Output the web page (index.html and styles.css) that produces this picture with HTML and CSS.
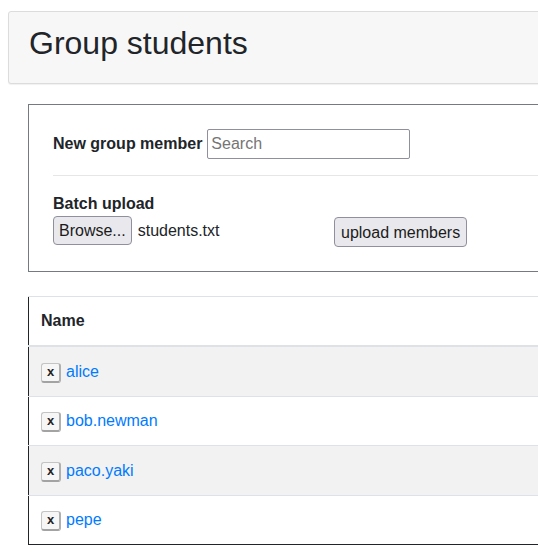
FILE: index.html
```html
<!DOCTYPE html>
<html lang="en">
<head>
<meta charset="utf-8">
<title>Group students</title>
<link rel="stylesheet" href="styles.css">
</head>
<body>
<div class="page">
  <header class="jumbo">
    <h2 class="title">Group students</h2>
  </header>
  <section class="content">
    <div class="formbox">
      <div class="row-member">
        <label class="lbl" for="member">New group member</label>
        <input id="member" class="search" type="text" placeholder="Search">
      </div>
      <hr class="sep">
      <div class="batch">
        <div class="lbl">Batch upload</div>
        <div class="upload-row">
          <div class="file">
            <button class="btn btn-browse" type="button">Browse...</button>
            <span class="fname">students.txt</span>
          </div>
          <button class="btn btn-upload" type="button">upload members</button>
        </div>
      </div>
    </div>
    <table class="members">
      <thead>
        <tr><th>Name</th></tr>
      </thead>
      <tbody>
        <tr class="odd"><td><div class="cell"><button class="xbtn" type="button">x</button><a href="#" class="link">alice</a></div></td></tr>
        <tr><td><div class="cell"><button class="xbtn" type="button">x</button><a href="#" class="link">bob.newman</a></div></td></tr>
        <tr class="odd"><td><div class="cell"><button class="xbtn" type="button">x</button><a href="#" class="link">paco.yaki</a></div></td></tr>
        <tr><td><div class="cell"><button class="xbtn" type="button">x</button><a href="#" class="link">pepe</a></div></td></tr>
      </tbody>
    </table>
  </section>
</div>
</body>
</html>
```

FILE: styles.css
```css
html, body {
  margin: 0;
  padding: 0;
  overflow: hidden;
  background: #fff;
}
body {
  font-family: "Liberation Sans", Arial, sans-serif;
  font-size: 16px;
  line-height: 24px;
  color: #212529;
}
.page {
  width: 640px;
  padding: 11px 0 0 8px;
}
.jumbo {
  background: #f7f7f7;
  border: 1px solid #dcdcdc;
  border-radius: 3px;
  box-shadow: 0 1px 1px rgba(0,0,0,0.06);
  padding: 12px 20px 13px;
}
.title {
  margin: 0 0 8px;
  font-size: 32px;
  font-weight: 400;
  line-height: 38.4px;
}
.content {
  padding: 20px 0 0 20px;
}
.formbox {
  border: 1px solid #737a80;
  padding: 24px;
}
.row-member {
  display: flex;
  align-items: center;
  gap: 5px;
}
.lbl {
  font-weight: 700;
}
.search {
  box-sizing: border-box;
  width: 203px;
  height: 30px;
  border: 1px solid #8f8f9d;
  border-radius: 2px;
  padding: 1px 3px;
  font-family: inherit;
  font-size: 16px;
  color: #212529;
}
.search::placeholder {
  color: #757575;
}
.sep {
  border: 0;
  border-top: 1px solid #e6e6e6;
  margin: 16px 0;
}
.upload-row {
  display: flex;
  align-items: flex-start;
}
.file {
  width: 281px;
  display: flex;
  align-items: center;
  gap: 6px;
}
.btn {
  box-sizing: border-box;
  font-family: inherit;
  font-size: 16px;
  line-height: 19px;
  color: #1b1b1b;
  background: #e9e9ed;
  border: 1px solid #8f8f9d;
  border-radius: 4px;
  padding: 4px 5px;
  height: 29px;
}
.btn-upload {
  padding: 4px 6px;
  height: 30px;
  margin-top: 1px;
}
.fname {
  color: #212529;
}
.members {
  margin-top: 24px;
  border-collapse: collapse;
  width: 620px;
  border-left: 1px solid #212529;
  border-bottom: 1px solid #212529;
}
.members th {
  text-align: left;
  font-weight: 700;
  padding: 12px;
  border-top: 1px solid #dee2e6;
  border-bottom: 2px solid #dee2e6;
}
.members td {
  padding: 12px;
  border-top: 1px solid #dee2e6;
}
.members tbody tr:first-child td {
  border-top: 0;
}
.members tr.odd td {
  background: #f2f2f2;
}
.cell {
  display: flex;
  align-items: center;
  height: 24.5px;
  gap: 5px;
}
.xbtn {
  box-sizing: border-box;
  width: 20px;
  height: 20px;
  padding: 0 0 1px;
  margin-top: 2px;
  font-family: "Liberation Sans", Arial, sans-serif;
  font-size: 13px;
  font-weight: 700;
  line-height: 16px;
  color: #222;
  background: #f6f6f6;
  border: 1px solid #c4c4c4;
  border-bottom: 2px solid #a3a3a3;
  border-right: 2px solid #b0b0b0;
  border-radius: 3px;
}
.link {
  color: #007bff;
  text-decoration: none;
}
```
